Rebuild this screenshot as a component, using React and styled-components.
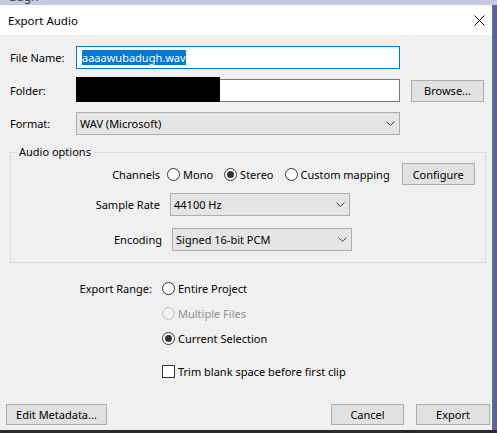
import React from 'react';
import styled, { createGlobalStyle } from 'styled-components';

const GlobalStyle = createGlobalStyle`
    html, body {
        margin: 0;
        padding: 0;
    }
    body {
        width: 497px;
        height: 433px;
        overflow: hidden;
        background: #c7c9df;
        font-family: "Noto Sans", "Segoe UI", sans-serif;
        font-size: 11px;
        color: #000;
    }
`;

const Screen = styled.div`
    display: flex;
    flex-direction: column;
    width: 497px;
    height: 433px;
`;

// bit of the app window peeking out above the dialog
const BehindStrip = styled.div`
    height: 5px;
    overflow: hidden;
    padding-left: 9px;
    background: #c7c9df;

    span {
        display: block;
        margin-top: -10px;
        font-size: 12px;
        line-height: 14px;
        color: #3a3a3a;
    }
`;

const Middle = styled.div`
    display: flex;
    height: 425px;
`;

const SideStrip = styled.div`
    flex: 1;
    background: #5d61a3;
`;

const BottomStrip = styled.div`
    height: 3px;
    background: #2b2b2b;
`;

const Window = styled.div`
    width: 492px;
    display: flex;
    flex-direction: column;
    background: #f0f0f0;
    border-right: 1px solid #6e6e6e;
`;

const TitleBar = styled.div`
    height: 30px;
    flex-shrink: 0;
    background: #fff;
    display: flex;
    align-items: center;
    justify-content: space-between;
    padding: 0 7px 0 8px;
`;

const Title = styled.span`
    font-size: 11.5px;
`;

const Body = styled.div`
    flex: 1;
    display: flex;
    flex-direction: column;
    padding: 11px 2px 5px 6px;
`;

const FileGrid = styled.div`
    display: grid;
    grid-template-columns: 66px 324px auto;
    grid-auto-rows: 23px;
    row-gap: 10px;
    align-items: center;
    padding-left: 4px;
`;

const Label = styled.span`
    white-space: nowrap;
    text-align: ${p => (p.$right ? 'right' : 'left')};
    color: ${p => (p.$disabled ? '#8f8f8f' : '#000')};
`;

const TextBox = styled.div`
    position: relative;
    height: 23px;
    box-sizing: border-box;
    background: #fff;
    border: 1px solid ${p => (p.$focused ? '#0078d7' : '#7a7a7a')};
    padding: 0 5px;
    display: flex;
    align-items: center;
`;

const Selected = styled.span`
    background: #0078d7;
    color: #fff;
    line-height: 15px;
`;

const Redaction = styled.div`
    position: absolute;
    left: -1px;
    top: -3px;
    width: 144px;
    height: 25px;
    background: #000;
`;

const Button = styled.button`
    width: ${p => p.$w || 73}px;
    height: ${p => p.$h || 21}px;
    margin-left: ${p => p.$ml || 0}px;
    padding: 0;
    box-sizing: border-box;
    background: #e1e1e1;
    border: 1px solid #adadad;
    border-radius: 0;
    font-family: inherit;
    font-size: 11px;
    color: #000;
`;

const Combo = styled.div`
    width: ${p => (p.$w ? `${p.$w}px` : 'auto')};
    height: 23px;
    margin-left: ${p => p.$ml || 0}px;
    box-sizing: border-box;
    background: #e5e5e5;
    border: 1px solid #adadad;
    padding: 0 4px 0 3px;
    display: flex;
    align-items: center;
    justify-content: space-between;
`;

const Group = styled.fieldset`
    margin: 10px 4px 0 4px;
    padding: 4px 0 11px 0;
    min-width: 0;
    border: 1px solid #dcdcdc;
    display: flex;
    flex-direction: column;

    legend {
        margin-left: 6px;
        padding: 0 2px;
        line-height: 14px;
    }
`;

const OptionRow = styled.div`
    display: flex;
    align-items: center;
    height: ${p => p.$h}px;
    margin-top: ${p => p.$mt || 0}px;
    padding-left: ${p => p.$shift || 0}px;

    & > ${Label} {
        width: 149px;
    }
`;

const RadioGroup = styled.div`
    display: flex;
    align-items: center;
    gap: 11px;
    margin-left: 7px;
`;

const Choice = styled.label`
    display: flex;
    align-items: center;
    gap: 3px;
    white-space: nowrap;
`;

const RadioDot = styled.span`
    width: 13px;
    height: 13px;
    box-sizing: border-box;
    border-radius: 50%;
    border: 1px solid ${p => (p.$disabled ? '#bcbcbc' : '#333')};
    background: ${p => (p.$disabled ? '#f0f0f0' : '#fff')};
    display: inline-flex;
    align-items: center;
    justify-content: center;
    flex-shrink: 0;

    &::after {
        content: '';
        width: 7px;
        height: 7px;
        border-radius: 50%;
        background: #333;
        display: ${p => (p.$checked ? 'block' : 'none')};
    }
`;

const CheckBox = styled.span`
    width: 13px;
    height: 13px;
    box-sizing: border-box;
    border: 1px solid #333;
    background: #fff;
    flex-shrink: 0;
`;

const RangeGrid = styled.div`
    display: grid;
    grid-template-columns: 146px auto;
    grid-auto-rows: 25px;
    column-gap: 10px;
    align-items: center;
    margin-top: 13px;
`;

const TrimRow = styled.div`
    grid-column: 2;
    margin-top: 15px;
`;

const Footer = styled.div`
    margin-top: auto;
    display: flex;
    align-items: flex-end;
`;

const Spacer = styled.div`
    flex: 1;
`;

const CloseIcon = () => (
    <svg width="11" height="11" viewBox="0 0 11 11">
        <path d="M0.5 0.5 L10.5 10.5 M10.5 0.5 L0.5 10.5" stroke="#000" strokeWidth="1" fill="none" />
    </svg>
);

const Chevron = () => (
    <svg width="9" height="5" viewBox="0 0 9 5">
        <polyline points="0.5,0.5 4.5,4.5 8.5,0.5" stroke="#444" strokeWidth="1" fill="none" />
    </svg>
);

const Radio = ({ label, checked, disabled }) => (
    <Choice>
        <RadioDot $checked={checked} $disabled={disabled} />
        <Label $disabled={disabled}>{label}</Label>
    </Choice>
);

const App = () => {
    return (
        <Screen>
            <GlobalStyle />
            <BehindStrip><span>dugh</span></BehindStrip>

            <Middle>
                <Window>
                    <TitleBar>
                        <Title>Export Audio</Title>
                        <CloseIcon />
                    </TitleBar>

                    <Body>
                        <FileGrid>
                            <Label>File Name:</Label>
                            <TextBox $focused>
                                <Selected>aaaawubadugh.wav</Selected>
                            </TextBox>
                            <span />

                            <Label>Folder:</Label>
                            <TextBox>
                                <Redaction />
                            </TextBox>
                            <Button $ml={11} $h={22}>Browse...</Button>

                            <Label>Format:</Label>
                            <Combo>
                                <span>WAV (Microsoft)</span>
                                <Chevron />
                            </Combo>
                            <span />
                        </FileGrid>

                        <Group>
                            <legend>Audio options</legend>

                            <OptionRow $h={22}>
                                <Label $right>Channels</Label>
                                <RadioGroup>
                                    <Radio label="Mono" />
                                    <Radio label="Stereo" checked />
                                    <Radio label="Custom mapping" />
                                </RadioGroup>
                                <Button $ml={12} $h={22}>Configure</Button>
                            </OptionRow>

                            <OptionRow $h={23} $mt={8}>
                                <Label $right>Sample Rate</Label>
                                <Combo $w={180} $ml={10}>
                                    <span>44100 Hz</span>
                                    <Chevron />
                                </Combo>
                            </OptionRow>

                            <OptionRow $h={23} $mt={12} $shift={2}>
                                <Label $right>Encoding</Label>
                                <Combo $w={180} $ml={10}>
                                    <span>Signed 16-bit PCM</span>
                                    <Chevron />
                                </Combo>
                            </OptionRow>
                        </Group>

                        <RangeGrid>
                            <Label $right>Export Range:</Label>
                            <Radio label="Entire Project" />
                            <span />
                            <Radio label="Multiple Files" disabled />
                            <span />
                            <Radio label="Current Selection" checked />
                            <TrimRow>
                                <Choice>
                                    <CheckBox />
                                    <Label>Trim blank space before first clip</Label>
                                </Choice>
                            </TrimRow>
                        </RangeGrid>

                        <Footer>
                            <Button $w={101}>Edit Metadata...</Button>
                            <Spacer />
                            <Button $w={73}>Cancel</Button>
                            <Button $w={74} $ml={12}>Export</Button>
                        </Footer>
                    </Body>
                </Window>
                <SideStrip />
            </Middle>

            <BottomStrip />
        </Screen>
    );
};

export default App;
